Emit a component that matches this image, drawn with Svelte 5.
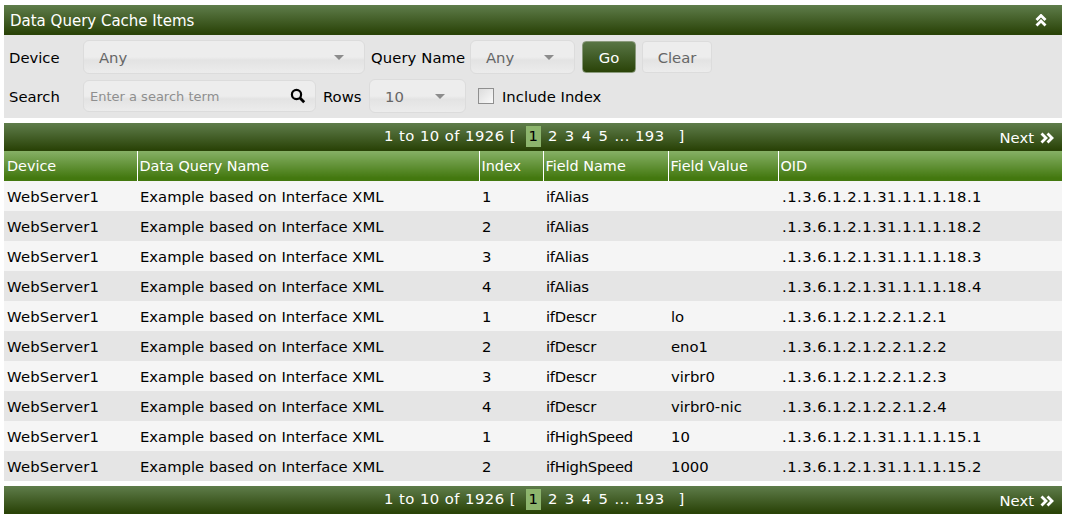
<script>
    const pages = ["2", "3", "4", "5"];
    const columns = ["Device", "Data Query Name", "Index", "Field Name", "Field Value", "OID"];
    const rows = [
        [1, "ifAlias", "", ".1.3.6.1.2.1.31.1.1.1.18.1"],
        [2, "ifAlias", "", ".1.3.6.1.2.1.31.1.1.1.18.2"],
        [3, "ifAlias", "", ".1.3.6.1.2.1.31.1.1.1.18.3"],
        [4, "ifAlias", "", ".1.3.6.1.2.1.31.1.1.1.18.4"],
        [1, "ifDescr", "lo", ".1.3.6.1.2.1.2.2.1.2.1"],
        [2, "ifDescr", "eno1", ".1.3.6.1.2.1.2.2.1.2.2"],
        [3, "ifDescr", "virbr0", ".1.3.6.1.2.1.2.2.1.2.3"],
        [4, "ifDescr", "virbr0-nic", ".1.3.6.1.2.1.2.2.1.2.4"],
        [1, "ifHighSpeed", "10", ".1.3.6.1.2.1.31.1.1.1.15.1"],
        [2, "ifHighSpeed", "1000", ".1.3.6.1.2.1.31.1.1.1.15.2"]
    ];
</script>

{#snippet pager()}
    <div class="pager">
        <div class="pages">
            <span class="range">1 to 10 of 1926 [</span>
            <span class="current">1</span>
            {#each pages as p}<span class="page">{p}</span>{/each}
            <span class="dots">...</span>
            <span class="last">193</span>
            <span class="close">]</span>
        </div>
        <div class="next">
            Next
            <svg width="14" height="12" viewBox="0 0 14 12">
                <path d="M1.5 1.5 L6 6 L1.5 10.5 M7.5 1.5 L12 6 L7.5 10.5" fill="none" stroke="#fff" stroke-width="2.8" />
            </svg>
        </div>
    </div>
{/snippet}

{#snippet arrow()}
    <span class="arrow"></span>
{/snippet}

<main class="wrap">
    <header class="title">
        <span class="title-text">Data Query Cache Items</span>
        <svg width="12" height="13" viewBox="0 0 12 13">
            <path d="M1.5 6 L6 1.5 L10.5 6 M1.5 11.5 L6 7 L10.5 11.5" fill="none" stroke="#fff" stroke-width="2.8" />
        </svg>
    </header>

    <section class="filters">
        <div class="filter-row">
            <label class="lbl">Device</label>
            <div class="select device"><span>Any</span>{@render arrow()}</div>
            <label class="qlbl">Query Name</label>
            <div class="select query"><span>Any</span>{@render arrow()}</div>
            <button class="btn go">Go</button>
            <button class="btn clear">Clear</button>
        </div>
        <div class="filter-row second">
            <label class="lbl">Search</label>
            <div class="search">
                <span class="placeholder">Enter a search term</span>
                <svg width="16" height="16" viewBox="0 0 16 16">
                    <circle cx="6.5" cy="6.5" r="4.6" fill="none" stroke="#000" stroke-width="2.2" />
                    <path d="M10 10 L14.2 14.2" stroke="#000" stroke-width="2.8" />
                </svg>
            </div>
            <label class="rlbl">Rows</label>
            <div class="select rows"><span>10</span>{@render arrow()}</div>
            <span class="check"></span>
            <label class="inc">Include Index</label>
        </div>
    </section>

    <div class="results">
        {@render pager()}
        <table>
            <colgroup>
                <col style="width:133px" />
                <col style="width:342px" />
                <col style="width:64px" />
                <col style="width:125px" />
                <col style="width:110px" />
                <col />
            </colgroup>
            <thead>
                <tr>
                    {#each columns as c}<th>{c}</th>{/each}
                </tr>
            </thead>
            <tbody>
                {#each rows as r}
                    <tr>
                        <td class="dev">WebServer1</td>
                        <td>Example based on Interface XML</td>
                        <td>{r[0]}</td>
                        <td class="field">{r[1]}</td>
                        <td>{r[2]}</td>
                        <td class="oid">{r[3]}</td>
                    </tr>
                {/each}
            </tbody>
        </table>
    </div>
    <div class="foot">
        {@render pager()}
    </div>
</main>

<style>
    :global(body) {
        margin: 0;
        background: #fff;
        overflow: hidden;
    }
    .wrap {
        box-sizing: border-box;
        width: 1067px;
        height: 518px;
        padding: 5px 5px 0 4px;
        font-family: "DejaVu Sans", Verdana, sans-serif;
        font-size: 14.8px;
        color: #000;
    }
    .title {
        height: 30px;
        display: flex;
        align-items: center;
        justify-content: space-between;
        padding: 0 15px 0 6px;
        color: #fff;
        font-size: 15px;
        background: linear-gradient(#5f7d4b, #2a4308 95%);
    }
    .title-text {
        padding-top: 2px;
    }
    .filters {
        height: 83px;
        box-sizing: border-box;
        padding-top: 5px;
        background: #e5e5e5;
    }
    .filter-row {
        display: flex;
        align-items: center;
        height: 34px;
        padding-left: 5px;
    }
    .filter-row.second {
        margin-top: 5px;
    }
    .lbl {
        width: 74px;
    }
    .select {
        box-sizing: border-box;
        height: 34px;
        display: flex;
        align-items: center;
        justify-content: space-between;
        border: 1px solid #dcdcdc;
        border-radius: 6px;
        color: #666;
        background: linear-gradient(#ededed 50%, #e3e3e3 60%, #ececec);
    }
    .device {
        width: 282px;
        padding: 0 20px 0 15px;
    }
    .qlbl {
        margin-left: 6px;
        width: 99px;
        letter-spacing: 0.1px;
    }
    .query {
        width: 105px;
        padding: 0 20px 0 15px;
    }
    .rows {
        width: 97px;
        padding: 0 20px 0 15px;
    }
    .arrow {
        width: 0;
        height: 0;
        border-left: 5px solid transparent;
        border-right: 5px solid transparent;
        border-top: 5px solid #8c8c8c;
    }
    .btn {
        box-sizing: border-box;
        height: 32px;
        border-radius: 4px;
        font: inherit;
        padding: 0;
    }
    .go {
        width: 54px;
        margin-left: 7px;
        color: #fff;
        border: 1px solid #8a9a7c;
        background: linear-gradient(#587545, #2a4308);
    }
    .clear {
        width: 70px;
        margin-left: 6px;
        color: #666;
        border: 1px solid #dcdcdc;
        background: linear-gradient(#ededed 50%, #e3e3e3 60%, #ececec);
    }
    .search {
        box-sizing: border-box;
        width: 233px;
        height: 32px;
        display: flex;
        align-items: center;
        justify-content: space-between;
        padding: 0 9px 0 6px;
        border: 1px solid #dcdcdc;
        border-radius: 6px;
        background: linear-gradient(#ededed 50%, #e3e3e3 60%, #ececec);
    }
    .placeholder {
        font-size: 13px;
        color: #8f8f8f;
    }
    .rlbl {
        margin-left: 7px;
        width: 46px;
    }
    .check {
        box-sizing: border-box;
        width: 16px;
        height: 16px;
        margin-left: 12px;
        border: 1px solid #8f8f8f;
        background: linear-gradient(135deg, #dcdcdc, #fafafa);
    }
    .inc {
        margin-left: 8px;
    }
    .results {
        margin-top: 5px;
    }
    .foot {
        margin-top: 5px;
    }
    .pager {
        position: relative;
        height: 28px;
        color: #fff;
        background: linear-gradient(#5f7d4b, #2a4308 95%);
    }
    .pages {
        position: absolute;
        left: 380px;
        top: 3px;
        display: flex;
        align-items: flex-start;
        height: 21px;
        line-height: 19px;
        white-space: nowrap;
        letter-spacing: 0.45px;
    }
    .current {
        box-sizing: border-box;
        width: 15px;
        height: 21px;
        margin-left: 10px;
        padding-bottom: 2px;
        display: flex;
        align-items: center;
        justify-content: center;
        color: #000;
        background: #8db56d;
    }
    .page {
        margin-left: 7px;
    }
    .dots {
        margin-left: 6px;
    }
    .last {
        margin-left: 5px;
    }
    .close {
        margin-left: 14px;
    }
    .next {
        position: absolute;
        right: 8px;
        top: 6px;
        display: flex;
        align-items: center;
        gap: 6px;
    }
    table {
        width: 100%;
        table-layout: fixed;
        border-collapse: collapse;
    }
    th {
        height: 30px;
        padding: 0 0 0 2px;
        box-sizing: border-box;
        text-align: left;
        font-weight: normal;
        font-size: 14.4px;
        color: #fff;
        border-left: 1px solid #fff;
        background: linear-gradient(#86b066, #43780f 90%);
    }
    th:first-child {
        border-left: none;
        padding-left: 3px;
    }
    td {
        height: 30px;
        padding: 1px 0 0 3px;
        box-sizing: border-box;
    }
    td.dev {
        letter-spacing: 0.2px;
    }
    td.field {
        letter-spacing: -0.25px;
    }
    td.oid {
        padding-left: 4px;
        letter-spacing: 0.45px;
    }
    tbody tr:nth-child(odd) {
        background: #f5f5f5;
    }
    tbody tr:nth-child(even) {
        background: #e5e5e5;
    }
</style>
